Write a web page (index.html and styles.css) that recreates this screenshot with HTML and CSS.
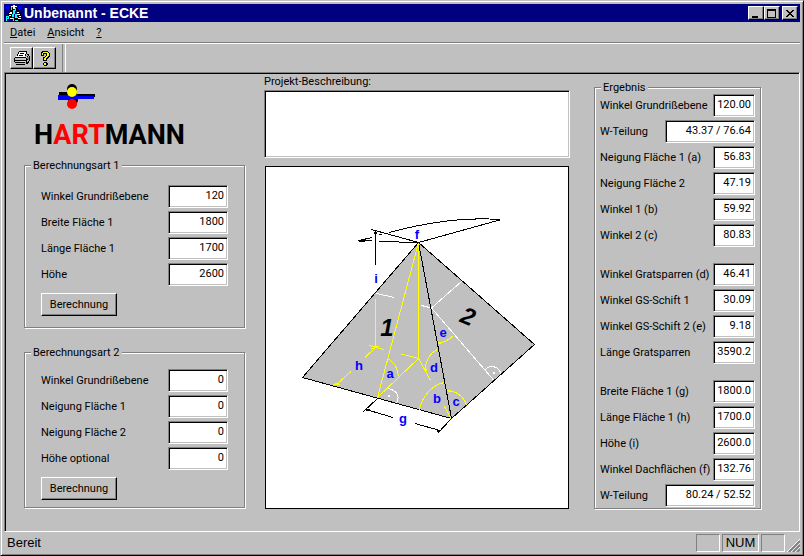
FILE: index.html
```html
<!DOCTYPE html>
<html lang="de">
<head>
    <meta charset="UTF-8">
    <meta name="viewport" content="width=device-width, initial-scale=1.0">
    <title>Unbenannt - ECKE</title>
    <link rel="stylesheet" href="styles.css">
</head>
<body>
    <header class="title-bar">
        <svg class="app-icon" width="16" height="16" viewBox="0 0 16 16" shape-rendering="crispEdges">
            <path fill="#000" d="M4 3h3v4H4zM9 3h4v4H9zM6 5h4v4H6zM2 8h5v5H2zM9 8h6v4H9zM1 13h6v2H1zM7 12h8v4H7z"/>
            <path fill="#00f" d="M0 1h1v4H0zM2 1h1v4H2zM1 3h1v2H1zM3 2h1v2H3zM12 1h3v1h-3zM11 2h1v1h-1zM12 3h3v1h-3zM13 4h2v1h-2z"/>
            <path fill="#0ff" d="M5 2h1v3H5zM9 3h1v3H9zM7 5h2v4H7zM6 9h2v3H6zM9 9h2v3H9zM0 11h3v1H0zM0 12h1v4H0zM2 12h1v2H1v-1h1zM7 13h1v3H7zM9 12h3v1H9zM9 15h3v1H9z"/>
            <path fill="#fff" d="M7 0h2v1H7zM5 1h6v1H5zM7 2h2v2H7zM4 7h2v1H4zM3 8h3v1H3zM11 7h2v1h-2zM11 9h3v1h-3zM3 10h2v1H3zM13 11h2v1h-2zM4 13h3v1H4zM12 13h3v1h-3z"/>
        </svg>
        <h1>Unbenannt - ECKE</h1>
        <div class="window-buttons">
            <button type="button" aria-label="Minimieren">
                <svg width="10" height="10" shape-rendering="crispEdges"><path d="M1 8h6v2H1z"/></svg>
            </button>
            <button type="button" aria-label="Maximieren">
                <svg width="10" height="10" shape-rendering="crispEdges"><path fill-rule="evenodd" d="M0 1h9v9H0zM1 3v6h7V3z"/></svg>
            </button>
            <button type="button" class="close" aria-label="Schließen">
                <svg width="10" height="10" shape-rendering="crispEdges"><path d="M1 2h2v1h1v1h2V3h1V2h2v1H8v1H7v1H6v1h1v1h1v1h1v1H7V8H6V7H4v1H3v1H1V8h1V7h1V6h1V5H3V4H2V3H1z"/></svg>
            </button>
        </div>
    </header>

    <nav class="menu">
        <a href="#"><u>D</u>atei</a>
        <a href="#"><u>A</u>nsicht</a>
        <a href="#"><u>?</u></a>
    </nav>

    <div class="toolbar">
        <button type="button" aria-label="Drucken">
            <svg width="18" height="16" viewBox="0 0 18 16" shape-rendering="crispEdges">
                <path fill="#fff" d="M6 1h8l-2 6H3z"/>
                <path fill="#c0c0c0" d="M1 7h12v7H2z"/>
                <path fill="none" stroke="#000" d="M6 1.500h8M5.500 2v2M4.500 4v2M13.500 2v2M12.500 4v2M7 3.500h4M6 5.500h4M2 7.500h11M1.500 8v4M2 10.500h11M2 12.500h10M3 14.500h9M13.500 8v6M14.500 6v1M15.500 5v1M16.500 6v5M15.500 11v2M14.500 12v2M14 4.500h2M14 9.500h2"/>
                <path fill="#808080" d="M14 7h1v2h-1zM15 7h1v3h-1z"/>
                <path fill="#ff0" d="M7 11h5v1H7z"/>
            </svg>
        </button>
        <button type="button" aria-label="Info">
            <svg width="18" height="16" viewBox="0 0 18 16" shape-rendering="crispEdges">
                <path fill="#000" d="M6 1h6v1h1v1h1v4h-1v1h-1v1h-1v2H7V7h2V6h1V4H8v2H5V2h1zM8 12h3v1h1v2h-1v1H8v-1H7v-2h1z"/>
                <path fill="#ff0" d="M7 2h5v1h1v3h-1v1h-1v1h-1v2H8V8h1V7h1V6h1V3H7v2H6V3h1zM8 13h2v2H8z"/>
            </svg>
        </button>
    </div>

    <main class="client">
        <div class="inputs">
            <svg class="logo" width="170" height="68" viewBox="24 82 170 68" role="img" aria-label="HARTMANN">
                <circle cx="72" cy="89" r="5"/>
                <circle cx="73" cy="100" r="5"/>
                <path d="M59 92h18v2h18v3H59z"/>
                <path fill="#00f" d="M58 95h20v1h16v3H70v1H58z"/>
                <circle cx="72" cy="92" r="5" fill="#ff0"/>
                <circle cx="72" cy="104" r="5" fill="#f00"/>
                <text x="34" y="144">H<tspan class="red">ART</tspan>MANN</text>
            </svg>

            <fieldset class="group">
                <legend>Berechnungsart 1</legend>
                <div class="row">
                    <label for="winkel1">Winkel Grundrißebene</label>
                    <input type="text" id="winkel1" value="120">
                </div>
                <div class="row">
                    <label for="breite1">Breite Fläche 1</label>
                    <input type="text" id="breite1" value="1800">
                </div>
                <div class="row">
                    <label for="laenge1">Länge Fläche 1</label>
                    <input type="text" id="laenge1" value="1700">
                </div>
                <div class="row">
                    <label for="hoehe1">Höhe</label>
                    <input type="text" id="hoehe1" value="2600">
                </div>
                <button type="button" class="calc">Berechnung</button>
            </fieldset>

            <fieldset class="group compact">
                <legend>Berechnungsart 2</legend>
                <div class="row">
                    <label for="winkel2">Winkel Grundrißebene</label>
                    <input type="text" id="winkel2" value="0">
                </div>
                <div class="row">
                    <label for="neigung1">Neigung Fläche 1</label>
                    <input type="text" id="neigung1" value="0">
                </div>
                <div class="row">
                    <label for="neigung2">Neigung Fläche 2</label>
                    <input type="text" id="neigung2" value="0">
                </div>
                <div class="row">
                    <label for="hoehe2">Höhe optional</label>
                    <input type="text" id="hoehe2" value="0">
                </div>
                <button type="button" class="calc">Berechnung</button>
            </fieldset>
        </div>

        <div class="project">
            <label for="projekt">Projekt-Beschreibung:</label>
            <textarea id="projekt"></textarea>
            <div class="drawing">
                <svg viewBox="266 167 302 341">
                    <!-- roof faces -->
                    <path class="face" d="M418.500 242.500L302.500 377.500L451.500 418.500L534.500 344.500z"/>

                    <!-- auxiliary lines -->
                    <g class="white">
                        <path d="M376.500 293.500l18 4M421.500 305.500l10 2.500l30.500-27M431.500 308l62 72"/>
                        <path d="M387.500 388.500c6 1 14 5 9 14.500M485 370c4-5 13-5 16 3.500"/>
                        <path d="M388 396h2M493 373h2" stroke-width="2"/>
                    </g>
                    <g class="yellow">
                        <path d="M418.500 242.500L377.500 397.500L418.500 358.500M401 354l17.500 4.500l12 22M444.500 406.500l6.500 12"/>
                        <path d="M375.500 299v47M369 345.500l15 4M371 349l8-3M376 347l-11 10.500M351 371.500L336 385M333 384h7"/>
                        <path d="M387.500 358.500c6 3 10 9 11 17.500M438.500 342.500c6 0 10-2 14-6.500M437.500 349.500c-7 3-12 11-12.500 20.500M444 382.500c-12 3-21 13-25 27.500M447.500 390.500c10 1 16 6 19 14.500"/>
                        <path d="M335 384h4M374 346.500h4M424 370h3M437 342.500h4M448 391h3" stroke-width="2"/>
                    </g>

                    <!-- edges and dimension lines -->
                    <g class="black">
                        <path d="M418.500 242.500L451.500 418.500L437.500 433.500"/>
                        <path d="M358.500 240.500h13M379 241.500l39.500 1M371.500 229.500l47 13l81-22.500M358.500 240.500l14-3M379 234.500h3M389 232.500Q450 216 500 219.500"/>
                        <path d="M375.500 231v34M377.500 398.500l-14 13M366 409.500l27 8M415 423.500l25 7"/>
                        <path d="M374 232.500h3M359 240.500h6M366 409.500h4M437 430.500h3" stroke-width="2"/>
                    </g>
                    <path class="yellow" d="M418.500 243v115"/>

                    <g class="marks">
                        <text x="417" y="239">f</text>
                        <text x="376" y="283">i</text>
                        <text x="359" y="370">h</text>
                        <text x="390" y="378">a</text>
                        <text x="443" y="337">e</text>
                        <text x="434" y="372">d</text>
                        <text x="437" y="403">b</text>
                        <text x="456" y="406">c</text>
                        <text x="403" y="423">g</text>
                    </g>
                    <g class="numbers">
                        <text x="387" y="336">1</text>
                        <text transform="translate(465 324) rotate(22)">2</text>
                    </g>
                </svg>
            </div>
        </div>

        <fieldset class="group results">
            <legend>Ergebnis</legend>
            <div class="row">
                <label for="r1">Winkel Grundrißebene</label>
                <input type="text" id="r1" value="120.00" readonly>
            </div>
            <div class="row">
                <label for="r2">W-Teilung</label>
                <input type="text" id="r2" class="wide" value="43.37 / 76.64" readonly>
            </div>
            <div class="row">
                <label for="r3">Neigung Fläche 1 (a)</label>
                <input type="text" id="r3" value="56.83" readonly>
            </div>
            <div class="row">
                <label for="r4">Neigung Fläche 2</label>
                <input type="text" id="r4" value="47.19" readonly>
            </div>
            <div class="row">
                <label for="r5">Winkel 1 (b)</label>
                <input type="text" id="r5" value="59.92" readonly>
            </div>
            <div class="row">
                <label for="r6">Winkel 2 (c)</label>
                <input type="text" id="r6" value="80.83" readonly>
            </div>
            <div class="row block-start">
                <label for="r7">Winkel Gratsparren (d)</label>
                <input type="text" id="r7" value="46.41" readonly>
            </div>
            <div class="row">
                <label for="r8">Winkel GS-Schift 1</label>
                <input type="text" id="r8" value="30.09" readonly>
            </div>
            <div class="row">
                <label for="r9">Winkel GS-Schift 2 (e)</label>
                <input type="text" id="r9" value="9.18" readonly>
            </div>
            <div class="row">
                <label for="r10">Länge Gratsparren</label>
                <input type="text" id="r10" value="3590.2" readonly>
            </div>
            <div class="row block-start">
                <label for="r11">Breite Fläche 1 (g)</label>
                <input type="text" id="r11" value="1800.0" readonly>
            </div>
            <div class="row">
                <label for="r12">Länge Fläche 1 (h)</label>
                <input type="text" id="r12" value="1700.0" readonly>
            </div>
            <div class="row">
                <label for="r13">Höhe (i)</label>
                <input type="text" id="r13" value="2600.0" readonly>
            </div>
            <div class="row">
                <label for="r14">Winkel Dachflächen (f)</label>
                <input type="text" id="r14" value="132.76" readonly>
            </div>
            <div class="row">
                <label for="r15">W-Teilung</label>
                <input type="text" id="r15" class="wide" value="80.24 / 52.52" readonly>
            </div>
        </fieldset>
    </main>

    <footer class="status-bar">
        <span class="message">Bereit</span>
        <span class="pane"></span>
        <span class="pane num">NUM</span>
        <span class="pane"></span>
        <svg class="grip" width="13" height="13">
            <path stroke="#fff" d="M0 13L13 0M4 13l9-9M8 13l5-5"/>
            <path stroke="#808080" stroke-width="2" d="M2 13L13 2M6 13l7-7M10 13l3-3"/>
        </svg>
    </footer>
</body>
</html>
```
FILE: styles.css
```css
* {
    margin: 0;
    padding: 0;
    box-sizing: border-box;
}

body {
    display: flex;
    flex-direction: column;
    min-height: 100vh;
    padding: 3px;
    background: #c0c0c0;
    color: #000;
    font: 11px/13px Roboto, "Liberation Sans", sans-serif;
    border: 1px solid;
    border-color: #c0c0c0 #000 #000 #c0c0c0;
    box-shadow: inset 1px 1px 0 #fff, inset -1px -1px 0 #808080;
}

button,
input,
textarea {
    font: inherit;
    color: inherit;
    border-radius: 0;
    outline: none;
}

button {
    display: flex;
    align-items: center;
    justify-content: center;
    background: #c0c0c0;
    border: 1px solid;
    border-color: #fff #000 #000 #fff;
    box-shadow: inset -1px -1px 0 #808080;
}

input,
textarea {
    background: #fff;
    border: 1px solid;
    border-color: #808080 #fff #fff #808080;
    box-shadow: inset 1px 1px 0 #000, inset -1px -1px 0 #c0c0c0;
}

/* Title bar */
.title-bar {
    display: flex;
    align-items: center;
    height: 18px;
    padding: 0 2px;
    background: #000080;
    color: #fff;
}

.title-bar h1 {
    flex: 1;
    margin-left: 2px;
    font: bold 14px/18px "Liberation Sans", sans-serif;
}

.window-buttons {
    display: flex;
}

.window-buttons button {
    width: 16px;
    height: 14px;
}

.window-buttons .close {
    margin-left: 2px;
}

/* Menu and toolbar */
.menu {
    display: flex;
    gap: 12px;
    height: 21px;
    padding: 0 6px;
    line-height: 21px;
    border-bottom: 1px solid #808080;
}

.menu a {
    color: #000;
    text-decoration: none;
}

.toolbar {
    display: flex;
    height: 29px;
    padding: 3px 6px;
    border-top: 1px solid #fff;
}

.toolbar button {
    width: 23px;
    height: 22px;
}

.toolbar::after {
    content: "";
    width: 2px;
    margin: -3px 0 -3px 6px;
    border-left: 1px solid #808080;
    border-right: 1px solid #fff;
}

/* Client area */
.client {
    flex: 1;
    display: grid;
    grid-template-columns: 221px 1fr 172px;
    column-gap: 19px;
    padding: 1px 38px 22px 19px;
    border: 1px solid;
    border-color: #808080 #fff #fff #808080;
    box-shadow: inset 1px 1px 0 #000;
}

.inputs {
    padding-top: 8px;
}

.logo {
    display: block;
    margin-bottom: 9px;
}

.logo text {
    font: bold 27px Roboto, "Liberation Sans", sans-serif;
}

.logo .red {
    fill: #f00;
}

.group {
    min-width: 0;
    padding: 13px 16px 11px;
    border: 1px solid #808080;
    box-shadow: 1px 1px 0 #fff, inset 1px 1px 0 #fff;
}

.group legend {
    margin-left: -10px;
    padding: 0 2px;
    background: #c0c0c0;
}

.group.compact {
    margin-top: 18px;
    padding: 10px 16px 7px;
}

.row {
    display: flex;
    align-items: center;
    justify-content: space-between;
    margin-bottom: 3px;
    white-space: nowrap;
}

.row input {
    flex-shrink: 0;
    width: 60px;
    height: 23px;
    padding: 1px 3px 4px 2px;
    text-align: right;
}

.calc {
    width: 76px;
    height: 23px;
    margin-top: 7px;
}

/* Project column */
.project {
    display: flex;
    flex-direction: column;
    padding-top: 1px;
}

.project textarea {
    height: 68px;
    margin-top: 2px;
    padding: 3px;
    resize: none;
}

.drawing {
    flex: 1;
    margin: 8px 1px 0;
    background: #fff;
    border: 1px solid #000;
}

.drawing svg {
    display: block;
    width: 100%;
    height: 100%;
}

.drawing path {
    fill: none;
    shape-rendering: crispEdges;
}

.drawing .face {
    fill: #c0c0c0;
    stroke: #000;
}

.drawing .white {
    stroke: #fff;
}

.drawing .yellow {
    stroke: #ff0;
}

.drawing .black {
    stroke: #000;
}

.marks text {
    fill: #00f;
    font: bold 13px "Liberation Sans", sans-serif;
    text-anchor: middle;
}

.numbers text {
    font: italic bold 24px "Liberation Sans", sans-serif;
    text-anchor: middle;
}

/* Results */
.group.results {
    align-self: start;
    margin: 7px 0 0 5px;
    padding: 0 5px 1px;
}

.results legend {
    margin-left: 1px;
}

.results .row input {
    width: 42px;
}

.results .row .wide {
    width: 90px;
}

.results .row:last-child {
    margin-bottom: 0;
}

.results .block-start {
    margin-top: 16px;
}

/* Status bar */
.status-bar {
    display: flex;
    align-items: center;
    gap: 2px;
    height: 20px;
    padding: 2px 0 0 3px;
    font: 13px/16px "Liberation Sans", sans-serif;
}

.message {
    flex: 1;
}

.pane {
    width: 24px;
    height: 18px;
    border: 1px solid;
    border-color: #808080 #fff #fff #808080;
}

.pane.num {
    width: 37px;
    text-align: center;
}

.grip {
    align-self: flex-end;
}
```
